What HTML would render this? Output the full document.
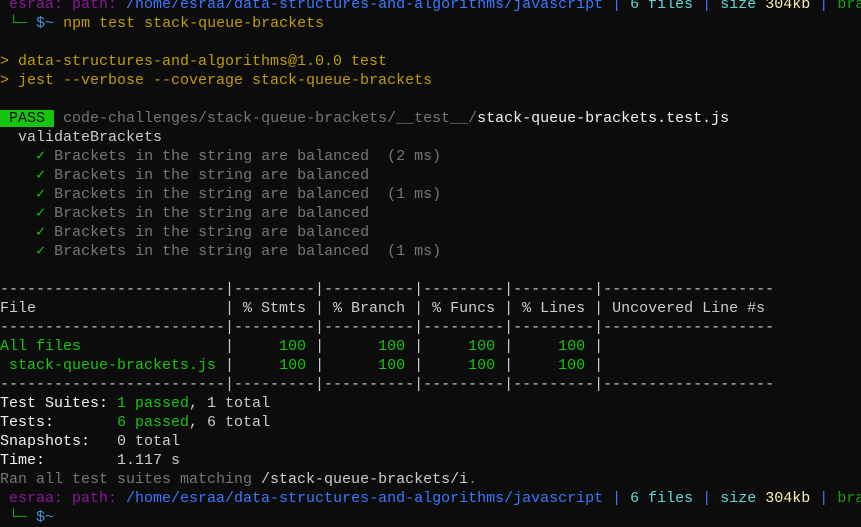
<!DOCTYPE html>
<html><head><meta charset="utf-8"><style>
html,body{margin:0;padding:0;background:#0c0c0c;width:861px;height:525px;overflow:hidden}
pre{margin:0;position:absolute;left:0;top:-5.5px;font-family:"Liberation Mono","DejaVu Sans Mono",monospace;font-size:15px;line-height:19px;color:#cccccc;white-space:pre}
.p{color:#881798}.b{color:#3b78ff}.c{color:#61d6d6}.ly{color:#f9f1a5}.g{color:#13a10e}
.y{color:#c19c00}.gr{color:#767676}.w{color:#f2f2f2}.G{color:#16c60c}.bl{color:#3a96dd}
.pass{background:#16c60c;color:#0c0c0c}
</style></head><body><pre><span class="p"> esraa: path: </span><span class="b">/home/esraa/data-structures-and-algorithms/javascript</span> <span class="b">|</span> <span class="c">6 files</span> <span class="b">|</span> <span class="c">size</span> <span class="ly">304kb</span> <span class="b">|</span> <span class="g">bra</span>
<span class="g"> └─</span> <span class="bl">$~</span> <span class="y">npm test stack-queue-brackets</span>

<span class="y">&gt; data-structures-and-algorithms@1.0.0 test</span>
<span class="y">&gt; jest --verbose --coverage stack-queue-brackets</span>

<span class="pass"> PASS </span> <span class="gr">code-challenges/stack-queue-brackets/__test__/</span><span class="w">stack-queue-brackets.test.js</span>
  validateBrackets
    <span class="G">✓</span> <span class="gr">Brackets in the string are balanced  (2 ms)</span>
    <span class="G">✓</span> <span class="gr">Brackets in the string are balanced</span>
    <span class="G">✓</span> <span class="gr">Brackets in the string are balanced  (1 ms)</span>
    <span class="G">✓</span> <span class="gr">Brackets in the string are balanced</span>
    <span class="G">✓</span> <span class="gr">Brackets in the string are balanced</span>
    <span class="G">✓</span> <span class="gr">Brackets in the string are balanced  (1 ms)</span>

-------------------------|---------|----------|---------|---------|-------------------
File                     | % Stmts | % Branch | % Funcs | % Lines | Uncovered Line #s
-------------------------|---------|----------|---------|---------|-------------------
<span class="G">All files</span>                | <span class="G">    100</span> | <span class="G">     100</span> | <span class="G">    100</span> | <span class="G">    100</span> |
<span class="G"> stack-queue-brackets.js</span> | <span class="G">    100</span> | <span class="G">     100</span> | <span class="G">    100</span> | <span class="G">    100</span> |
-------------------------|---------|----------|---------|---------|-------------------
<span class="w">Test Suites: </span><span class="G">1 passed</span>, 1 total
<span class="w">Tests:       </span><span class="G">6 passed</span>, 6 total
<span class="w">Snapshots:   </span>0 total
<span class="w">Time:        </span>1.117 s
<span class="gr">Ran all test suites matching </span>/stack-queue-brackets/i<span class="gr">.</span>
<span class="p"> esraa: path: </span><span class="b">/home/esraa/data-structures-and-algorithms/javascript</span> <span class="b">|</span> <span class="c">6 files</span> <span class="b">|</span> <span class="c">size</span> <span class="ly">304kb</span> <span class="b">|</span> <span class="g">bra</span>
<span class="g"> └─</span> <span class="bl">$~</span></pre></body></html>
